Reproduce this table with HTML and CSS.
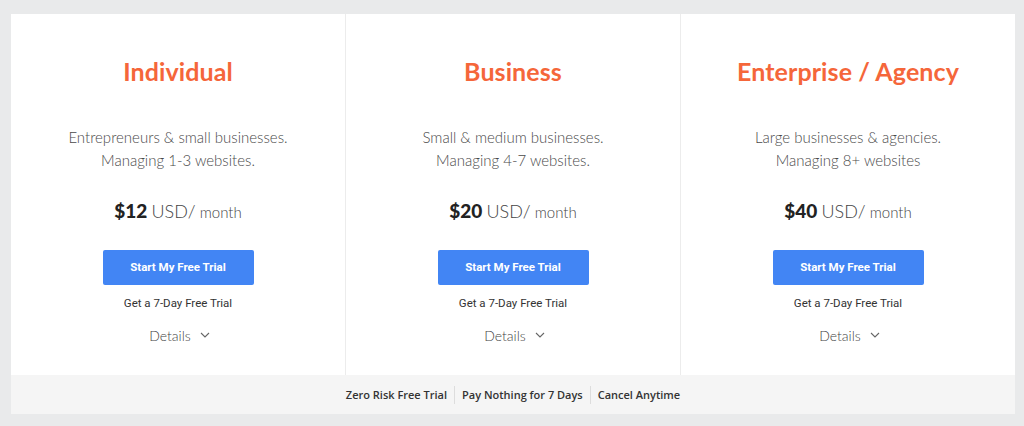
FILE: index.html
```html
<!DOCTYPE html>
<html>
<head>
<meta charset="utf-8">
<link rel="stylesheet" href="styles.css">
</head>
<body>
<div class="card">
  <div class="plans">
    <div class="plan">
      <h2 class="title">Individual</h2>
      <p class="desc">Entrepreneurs &amp; small businesses.<br>Managing 1-3 websites.</p>
      <div class="price"><b>$12</b> <span class="cur">USD/</span> <span class="per">month</span></div>
      <a class="btn">Start My Free Trial</a>
      <div class="note">Get a 7-Day Free Trial</div>
      <div class="details">Details <svg width="10" height="6" viewBox="0 0 10 6"><path d="M1 1l4 4 4-4" fill="none" stroke="#666" stroke-width="1.1"/></svg></div>
    </div>
    <div class="plan">
      <h2 class="title">Business</h2>
      <p class="desc">Small &amp; medium businesses.<br>Managing 4-7 websites.</p>
      <div class="price"><b>$20</b> <span class="cur">USD/</span> <span class="per">month</span></div>
      <a class="btn">Start My Free Trial</a>
      <div class="note">Get a 7-Day Free Trial</div>
      <div class="details">Details <svg width="10" height="6" viewBox="0 0 10 6"><path d="M1 1l4 4 4-4" fill="none" stroke="#666" stroke-width="1.1"/></svg></div>
    </div>
    <div class="plan">
      <h2 class="title">Enterprise / Agency</h2>
      <p class="desc">Large businesses &amp; agencies.<br>Managing 8+ websites</p>
      <div class="price"><b>$40</b> <span class="cur">USD/</span> <span class="per">month</span></div>
      <a class="btn">Start My Free Trial</a>
      <div class="note">Get a 7-Day Free Trial</div>
      <div class="details">Details <svg width="10" height="6" viewBox="0 0 10 6"><path d="M1 1l4 4 4-4" fill="none" stroke="#666" stroke-width="1.1"/></svg></div>
    </div>
  </div>
  <div class="footer">
    <span class="fi">Zero Risk Free Trial</span>
    <span class="fi">Pay Nothing for 7 Days</span>
    <span class="fi">Cancel Anytime</span>
  </div>
</div>
</body>
</html>
```

FILE: styles.css
```css
html, body { margin: 0; padding: 0; }
body {
  background: #e9eaeb;
  font-family: "Lato", "Noto Sans", sans-serif;
  width: 1024px;
  height: 426px;
  overflow: hidden;
}
.card {
  margin: 14px 0 0 11px;
  width: 1004px;
  background: #fff;
}
.plans {
  display: grid;
  grid-template-columns: 334px 335px 335px;
}
.plan {
  display: flex;
  flex-direction: column;
  align-items: center;
  padding: 42px 0 29px;
  text-align: center;
}
.plan + .plan { border-left: 1px solid #ececec; }
.title {
  margin: 0;
  font-size: 25px;
  line-height: 30px;
  font-weight: 700;
  color: #f5663a;
  letter-spacing: 0.1px;
}
.desc {
  margin: 40px 0 0;
  font-size: 15px;
  line-height: 23px;
  font-weight: 300;
  color: #4a4a4a;
}
.price {
  margin-top: 26px;
  line-height: 26px;
  color: #555;
}
.price b { font-size: 19px; font-weight: 900; color: #222; }
.price .cur { font-size: 18px; font-weight: 300; color: #444; }
.price .per { font-size: 15px; font-weight: 300; color: #444; }
.btn {
  margin-top: 25px;
  display: block;
  width: 151px;
  height: 35px;
  line-height: 35px;
  background: #4285f4;
  border-radius: 2px;
  color: #fff;
  font-family: "Roboto", "Liberation Sans", sans-serif;
  font-weight: 700;
  font-size: 11.5px;
}
.note {
  margin-top: 10px;
  line-height: 16px;
  font-family: "Roboto", "Liberation Sans", sans-serif;
  font-size: 11.5px;
  color: #333;
}
.details {
  margin-top: 15px;
  line-height: 20px;
  font-size: 14px;
  font-weight: 300;
  color: #444;
  display: flex;
  align-items: center;
  gap: 9px;
  padding-left: 3px;
}
.details svg { margin-top: -2px; }
.footer {
  height: 39px;
  background: #f5f5f5;
  display: flex;
  justify-content: center;
  align-items: center;
  font-family: "Open Sans", "Noto Sans", sans-serif;
  font-weight: 600;
  font-size: 11px;
  color: #333;
}
.fi { padding: 0 7px; line-height: 18px; }
.fi + .fi { border-left: 1px solid #ddd; }
```
